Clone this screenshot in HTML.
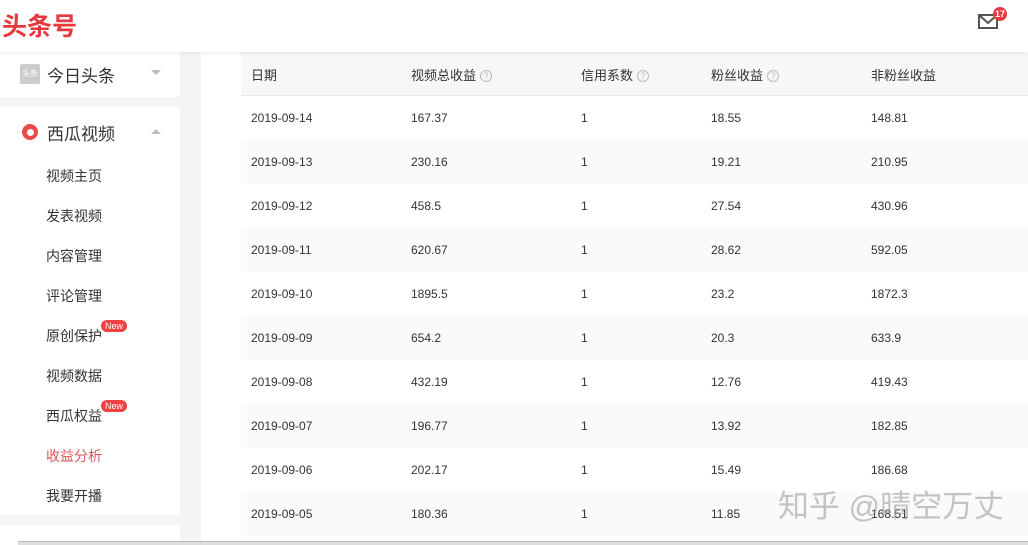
<!DOCTYPE html>
<html><head><meta charset="utf-8"><style>
*{margin:0;padding:0;box-sizing:border-box}
body{width:1028px;height:545px;overflow:hidden;background:#f4f5f6;font-family:"Liberation Sans","Noto Sans CJK SC",sans-serif;position:relative}
.hdr{position:absolute;left:0;top:0;width:1028px;height:52px;background:#fff;box-shadow:0 2px 4px rgba(0,0,0,.06);z-index:2}
.logo{position:absolute;left:2px;top:7px;font-size:25px;font-weight:bold;color:#e8383d}
.card{position:absolute;left:0;width:180px;background:#fff}
.sub{position:absolute;left:46px;font-size:14px;color:#333}
.new{position:absolute;background:#f04142;color:#fff;font-size:9px;border-radius:7px;padding:0 4px;height:12px;line-height:12px}
.main{position:absolute;left:201px;top:52px;width:827px;height:493px;background:#fff}
.row{position:absolute;left:241px;width:787px;height:44px;font-size:12px;color:#333}
.row span{position:absolute;top:15px}
.th{background:#f7f7f7;border-bottom:1px solid #e8e8e8;font-size:13px}
.th span{top:13px}
.q{display:inline-block;width:12px;height:12px;border:1px solid #bbb;border-radius:50%;font-size:9px;color:#bbb;text-align:center;line-height:10px;margin-left:4px;vertical-align:1px;font-style:normal}
</style></head><body>
<div class="hdr"><div class="logo">头条号</div>
<svg style="position:absolute;left:978px;top:12px" width="22" height="18" viewBox="0 0 22 18"><rect x="1" y="3" width="18" height="13" fill="none" stroke="#555" stroke-width="2"/><path d="M1 3 L10 11 L19 3" fill="none" stroke="#555" stroke-width="2"/></svg>
<div style="position:absolute;left:993px;top:7px;width:14px;height:14px;border-radius:50%;background:#e8383d;color:#fff;font-size:9px;font-weight:bold;text-align:center;line-height:14px">17</div>
</div>
<div class="card" style="top:52px;height:45px">
<div style="position:absolute;left:20px;top:12px;width:20px;height:20px;background:#ccc;border-radius:2px;color:#fff;font-size:8px;text-align:center;line-height:20px">头条</div>
<div style="position:absolute;left:47px;top:10px;font-size:17px;color:#333">今日头条</div>
<div style="position:absolute;left:151px;top:18px;border:5px solid transparent;border-top:5px solid #bbb"></div>
</div>
<div class="card" style="top:107px;height:408px">
<div style="position:absolute;left:22px;top:17px;width:16px;height:16px;border-radius:50%;background:#ea4b4b"><div style="position:absolute;left:5px;top:5px;width:7px;height:7px;border-radius:50%;background:#fff"></div></div>
<div style="position:absolute;left:47px;top:13px;font-size:17px;color:#333">西瓜视频</div>
<div style="position:absolute;left:151px;top:17px;border:5px solid transparent;border-bottom:5px solid #bbb"></div>
</div>
<div class="sub" style="top:166px">视频主页</div>
<div class="sub" style="top:206px">发表视频</div>
<div class="sub" style="top:246px">内容管理</div>
<div class="sub" style="top:286px">评论管理</div>
<div class="sub" style="top:326px">原创保护</div><div class="new" style="left:101px;top:320px">New</div>
<div class="sub" style="top:366px">视频数据</div>
<div class="sub" style="top:406px">西瓜权益</div><div class="new" style="left:101px;top:400px">New</div>
<div class="sub" style="top:446px;color:#e0545a">收益分析</div>
<div class="sub" style="top:486px">我要开播</div>
<div class="card" style="top:525px;height:20px"></div>
<div class="main"></div>
<div class="row th" style="top:52px"><span style="left:10px">日期</span><span style="left:170px">视频总收益<i class="q">?</i></span><span style="left:340px">信用系数<i class="q">?</i></span><span style="left:470px">粉丝收益<i class="q">?</i></span><span style="left:630px">非粉丝收益</span></div>
<div class="row" style="top:96px"><span style="left:10px">2019-09-14</span><span style="left:170px">167.37</span><span style="left:340px">1</span><span style="left:470px">18.55</span><span style="left:630px">148.81</span></div>
<div class="row" style="top:140px;background:#fafafa"><span style="left:10px">2019-09-13</span><span style="left:170px">230.16</span><span style="left:340px">1</span><span style="left:470px">19.21</span><span style="left:630px">210.95</span></div>
<div class="row" style="top:184px"><span style="left:10px">2019-09-12</span><span style="left:170px">458.5</span><span style="left:340px">1</span><span style="left:470px">27.54</span><span style="left:630px">430.96</span></div>
<div class="row" style="top:228px;background:#fafafa"><span style="left:10px">2019-09-11</span><span style="left:170px">620.67</span><span style="left:340px">1</span><span style="left:470px">28.62</span><span style="left:630px">592.05</span></div>
<div class="row" style="top:272px"><span style="left:10px">2019-09-10</span><span style="left:170px">1895.5</span><span style="left:340px">1</span><span style="left:470px">23.2</span><span style="left:630px">1872.3</span></div>
<div class="row" style="top:316px;background:#fafafa"><span style="left:10px">2019-09-09</span><span style="left:170px">654.2</span><span style="left:340px">1</span><span style="left:470px">20.3</span><span style="left:630px">633.9</span></div>
<div class="row" style="top:360px"><span style="left:10px">2019-09-08</span><span style="left:170px">432.19</span><span style="left:340px">1</span><span style="left:470px">12.76</span><span style="left:630px">419.43</span></div>
<div class="row" style="top:404px;background:#fafafa"><span style="left:10px">2019-09-07</span><span style="left:170px">196.77</span><span style="left:340px">1</span><span style="left:470px">13.92</span><span style="left:630px">182.85</span></div>
<div class="row" style="top:448px"><span style="left:10px">2019-09-06</span><span style="left:170px">202.17</span><span style="left:340px">1</span><span style="left:470px">15.49</span><span style="left:630px">186.68</span></div>
<div class="row" style="top:492px;background:#fafafa"><span style="left:10px">2019-09-05</span><span style="left:170px">180.36</span><span style="left:340px">1</span><span style="left:470px">11.85</span><span style="left:630px">168.51</span></div>
<div style="position:absolute;left:778px;top:481px;font-size:31px;color:rgba(150,150,150,.55);white-space:nowrap">知乎 @晴空万丈</div>
<div style="position:absolute;left:18px;top:541px;width:1010px;height:4px;background:#ddd;border-top:1px solid #bbb"></div>
</body></html>
